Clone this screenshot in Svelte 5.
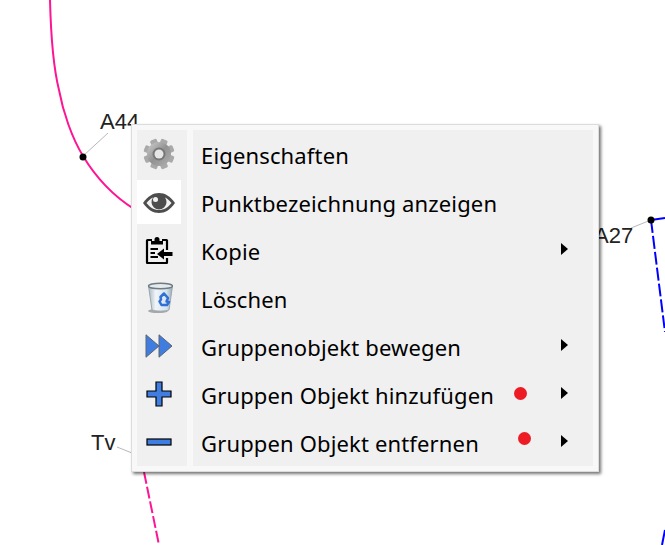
<script>
	const items = [
		{ icon: 'gear', label: 'Eigenschaften' },
		{ icon: 'eye', label: 'Punktbezeichnung anzeigen', active: true },
		{ icon: 'clip', label: 'Kopie', arrow: true },
		{ icon: 'trash', label: 'Löschen' },
		{ icon: 'forward', label: 'Gruppenobjekt bewegen', arrow: true },
		{ icon: 'plus', label: 'Gruppen Objekt hinzufügen', arrow: true, dot: 321, dotTop: 17 },
		{ icon: 'minus', label: 'Gruppen Objekt entfernen', arrow: true, dot: 325, dotTop: 14 }
	];

	const teeth = [0, 45, 90, 135, 180, 225, 270, 315];
</script>

<div class="canvas">
	<svg class="drawing" width="665" height="545" viewBox="0 0 665 545">
		<path d="M50 0C51 40 54 70 59 90C63 112 72 138 83 156C95 176 112 195 134 209" fill="none" stroke="#ff1493" stroke-width="2" />
		<path d="M144 472L159 545" fill="none" stroke="#ff1493" stroke-width="2" stroke-dasharray="12 3" />
		<path d="M651 220L665 218" fill="none" stroke="#0000ff" stroke-width="2" />
		<path d="M651 220L665 332" fill="none" stroke="#0000ff" stroke-width="2" stroke-dasharray="13 3" />
		<path d="M665 530L662 545" fill="none" stroke="#0000ff" stroke-width="2" />
		<path d="M83 156L108 133M117 447L132 453M631 228L651 220" fill="none" stroke="#b8b8b8" />
		<circle cx="83" cy="157" r="3.500" />
		<circle cx="651" cy="220" r="3.500" />
	</svg>
	<span class="point a44">A44</span>
	<span class="point tv">Tv</span>
	<span class="point a27">A27</span>

	<div class="menu" role="menu">
		{#each items as item}
			<div class="row" role="menuitem">
				<div class="gutter">
					<div class="icon" class:active={item.active}>
						{#if item.icon === 'gear'}
							<svg class="soft" width="34" height="34" viewBox="0 0 34 34">
								<defs>
									<linearGradient id="gearfill" x1="0" y1="0" x2="1" y2="1">
										<stop offset="0" stop-color="#cfcfcf" />
										<stop offset="0.5" stop-color="#929292" />
										<stop offset="1" stop-color="#b0b0b0" />
									</linearGradient>
								</defs>
								{#each teeth as a}
									<rect x="13.500" y="1.500" width="7" height="8" rx="1.500" fill="#a9a9a9" transform="rotate({a + 22} 17 17)" />
								{/each}
								<circle cx="17" cy="17" r="12" fill="url(#gearfill)" />
								<circle cx="17" cy="17" r="6.500" fill="#777" />
								<circle cx="17" cy="17" r="4.500" fill="#e6e6e6" />
							</svg>
						{:else if item.icon === 'eye'}
							<svg class="eye" width="34" height="24" viewBox="0 0 34 24">
								<path d="M1 12C6 5 11 2 17 2S28 5 33 12C28 19 23 22 17 22S6 19 1 12Z" fill="#4d4d4d" />
								<path d="M4.500 12C7 9 9 7.500 11 6.500A7.500 7.500 0 1 0 23 6.500C25 7.500 27 9 29.500 12C26 16.500 22 19 17 19S8 16.500 4.500 12Z" fill="#f2f2f2" />
								<circle cx="13.500" cy="8.500" r="2.500" fill="#f2f2f2" />
							</svg>
						{:else if item.icon === 'clip'}
							<svg width="28" height="28" viewBox="0 0 28 28">
								<path d="M7 4H2.500Q2 4 2 4.500V26.500Q2 27 2.500 27H21.500Q22 27 22 26.500V22M22 14V4.500Q22 4 21.500 4H17" fill="none" stroke="#000" stroke-width="2.200" />
								<path d="M6 8.500V5H9.500V3.500A2.500 2.500 0 0 1 14.500 3.500V5H18V8.500Z" fill="#000" />
								<path d="M5.500 13H13M5.500 17H10M5.500 21H13" stroke="#000" stroke-width="1.800" />
								<path d="M27.500 16H19V12.500L12 18L19 23.500V20H27.500Z" fill="#000" />
							</svg>
						{:else if item.icon === 'trash'}
							<svg class="soft" width="28" height="32" viewBox="0 0 28 32">
								<defs>
									<linearGradient id="binfill" x1="0" y1="0" x2="1" y2="0">
										<stop offset="0" stop-color="#a9b8c2" />
										<stop offset="0.3" stop-color="#f1f5f8" />
										<stop offset="0.75" stop-color="#d4e4ee" />
										<stop offset="1" stop-color="#98aab5" />
									</linearGradient>
								</defs>
								<ellipse cx="13" cy="29" rx="10" ry="2" fill="#a8a8a8" />
								<path d="M3.500 4L7 28C10 29.500 21 29.500 24 28L27.500 4Z" fill="url(#binfill)" stroke="#9aa6ad" />
								<ellipse cx="15.500" cy="4" rx="12" ry="2.800" fill="#e4ebef" stroke="#6f7b83" stroke-width="1.400" />
								<path d="M19 11.500L23 16L21.500 19.500L24 20L22 23H16.500L14.500 19.500L16 17.500L15.500 15Z" fill="none" stroke="#2f6fd6" stroke-width="2.500" stroke-linejoin="round" />
							</svg>
						{:else if item.icon === 'forward'}
							<svg width="28" height="24" viewBox="0 0 28 24">
								<path d="M1 .8L14 12L1 23.200Z" fill="#3f7de0" stroke="#5d6670" />
								<path d="M14 .8L27 12L14 23.200Z" fill="#3f7de0" stroke="#5d6670" />
							</svg>
						{:else if item.icon === 'plus'}
							<svg width="26" height="26" viewBox="0 0 26 26">
								<path d="M10 1H16V10H25V16H16V25H10V16H1V10H10Z" fill="#3f7de0" stroke="#000" stroke-width="1.200" />
							</svg>
						{:else}
							<svg width="26" height="8" viewBox="0 0 26 8">
								<rect x="1" y="1" width="24" height="6" fill="#3f7de0" stroke="#000" stroke-width="1.200" />
							</svg>
						{/if}
					</div>
				</div>
				<div class="body">
					<span class="label">{item.label}</span>
					{#if item.dot}
						<span class="dot" style="left: {item.dot}px; top: {item.dotTop}px"></span>
					{/if}
					{#if item.arrow}
						<span class="arrow"></span>
					{/if}
				</div>
			</div>
		{/each}
	</div>
</div>

<style>
	:global(body) {
		background: #fff;
		overflow: hidden;
	}

	.canvas {
		position: relative;
		width: 665px;
		height: 545px;
		overflow: hidden;
		font-family: "Noto Sans", sans-serif;
	}

	.drawing {
		position: absolute;
		left: 0;
		top: 0;
	}

	.point {
		position: absolute;
		font-family: "Liberation Sans", sans-serif;
		font-size: 22px;
		line-height: 24px;
		color: #222;
	}

	.a44 {
		left: 100px;
		top: 110px;
	}

	.tv {
		left: 91px;
		top: 431px;
	}

	.a27 {
		left: 594px;
		top: 224px;
	}

	.menu {
		position: absolute;
		left: 131px;
		top: 124px;
		box-sizing: border-box;
		width: 468px;
		padding: 5px;
		background: #f8f8f8;
		border: 1px solid #dcdcdc;
		box-shadow: 2px 2px 3px rgba(0, 0, 0, 0.55);
	}

	.row {
		display: flex;
		height: 48px;
		gap: 6px;
	}

	.gutter {
		width: 50px;
		background: #f0f0f0;
	}

	.icon {
		display: flex;
		align-items: center;
		justify-content: center;
		width: 44px;
		height: 44px;
		margin-top: 2px;
	}

	.soft {
		filter: blur(0.4px);
	}

	.eye {
		margin-top: 2px;
	}

	.active {
		background: #fff;
	}

	.body {
		position: relative;
		flex: 1;
		display: flex;
		align-items: center;
		padding-left: 8px;
		background: #f0f0f0;
	}

	.label {
		padding-top: 1px;
		font-size: 22px;
		letter-spacing: 0.15px;
		color: #000;
		white-space: nowrap;
	}

	.dot {
		position: absolute;
		width: 13px;
		height: 13px;
		border-radius: 50%;
		background: #ed1c24;
	}

	.arrow {
		position: absolute;
		left: 368px;
		top: 17px;
		border-left: 7px solid #000;
		border-top: 6.500px solid transparent;
		border-bottom: 6.500px solid transparent;
	}
</style>
